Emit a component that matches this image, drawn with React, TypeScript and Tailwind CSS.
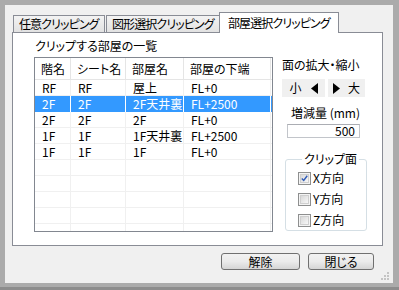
import React from 'react';

interface Row {
  floor: string;
  sheet: string;
  room: string;
  bottom: string;
  selected?: boolean;
}

const ROWS: Row[] = [
  { floor: 'RF', sheet: 'RF', room: '屋上', bottom: 'FL+0' },
  { floor: '2F', sheet: '2F', room: '2F天井裏', bottom: 'FL+2500', selected: true },
  { floor: '2F', sheet: '2F', room: '2F', bottom: 'FL+0' },
  { floor: '1F', sheet: '1F', room: '1F天井裏', bottom: 'FL+2500' },
  { floor: '1F', sheet: '1F', room: '1F', bottom: 'FL+0' },
];

const EMPTY_ROWS = 5;

function Tab({ label, active, className }: { label: string; active?: boolean; className: string }) {
  return (
    <div
      className={`flex items-center overflow-hidden border border-[#898c95] border-b-0 pl-[5px] tracking-[-0.9px] whitespace-nowrap ${
        active
          ? 'relative z-10 -mb-px h-[21px] bg-white pl-[8px]'
          : 'h-[17px] bg-linear-to-b from-[#f3f3f3] to-[#e2e2e2]'
      } ${className}`}
    >
      {label}
    </div>
  );
}

function Cells({ row }: { row?: Row }) {
  const sel = row?.selected;
  const cell = `h-full shrink-0 border-r pl-[7px] ${sel ? 'border-white' : 'border-[#f0f0f0]'}`;
  return (
    <div
      className={`flex h-[16px] items-center leading-[16px] ${
        sel ? 'bg-[#3399ff] text-white' : 'border-b border-[#f0f0f0]'
      }`}
    >
      <div className={`${cell} w-[36px]`}>{row?.floor}</div>
      <div className={`${cell} w-[55px]`}>{row?.sheet}</div>
      <div className={`${cell} w-[58px]`}>{row?.room}</div>
      <div className={`${cell} w-[87px]`}>{row?.bottom}</div>
    </div>
  );
}

function RoomList() {
  const head = 'flex h-full shrink-0 items-center border-r border-[#e5e5e5] pl-[6px]';
  return (
    <div className="h-[175px] w-[239px] overflow-hidden border border-[#828790] bg-white">
      <div className="flex h-[22px] items-center border-b border-[#e5e5e5]">
        <div className={`${head} w-[36px]`}>階名</div>
        <div className={`${head} w-[55px]`}>シート名</div>
        <div className={`${head} w-[58px]`}>部屋名</div>
        <div className={`${head} w-[87px]`}>部屋の下端</div>
      </div>
      {ROWS.map((row, i) => (
        <Cells key={i} row={row} />
      ))}
      {Array.from({ length: EMPTY_ROWS }, (_, i) => (
        <Cells key={`e${i}`} />
      ))}
    </div>
  );
}

function Arrow({ dir }: { dir: 'left' | 'right' }) {
  return (
    <svg width="7" height="11" viewBox="0 0 7 11">
      <polygon points={dir === 'left' ? '7,0 7,11 0,5.5' : '0,0 0,11 7,5.5'} fill="#000" />
    </svg>
  );
}

function Check({ label, checked }: { label: string; checked?: boolean }) {
  return (
    <div className="flex h-[14px] items-center gap-[2px]">
      <div className="flex h-[13px] w-[13px] items-center justify-center border border-[#8e8f8f] bg-[#f4f4f4]">
        <div className="flex h-[9px] w-[9px] items-center justify-center border border-[#cfcfcf] bg-linear-to-br from-[#d9d9d9] to-[#f7f7f7]">
          {checked && (
            <svg width="9" height="9" viewBox="0 0 9 9">
              <path d="M1 4.5 L3.5 7 L8 1" stroke="#2f5bb7" strokeWidth="1.8" fill="none" />
            </svg>
          )}
        </div>
      </div>
      <span>{label}</span>
    </div>
  );
}

function SideControls() {
  return (
    <div className="ml-[9px] flex w-[86px] flex-col">
      <div className="mt-[25px] h-[14px] leading-[14px]">面の拡大・縮小</div>
      <div className="mt-[7px] flex h-[18px] gap-[3px]">
        <button className="flex w-[43px] items-center justify-center gap-[9px] bg-[#f0f0f0]">
          <span>小</span>
          <Arrow dir="left" />
        </button>
        <button className="flex w-[37px] items-center justify-center gap-[8px] bg-[#f0f0f0]">
          <Arrow dir="right" />
          <span>大</span>
        </button>
      </div>
      <div className="mt-[9px] ml-[9px] h-[14px] leading-[14px]">増減量 (mm)</div>
      <div className="mt-[4px] ml-[5px] flex h-[14px] w-[73px] items-center justify-end border border-[#c2c5ca] border-t-[#abadb3] bg-white pr-[4px] leading-[12px]">
        500
      </div>
      <fieldset className="mt-[14px] ml-[3px] h-[79px] w-[82px] rounded-[3px] border border-[#d5dfe5] pl-[12px]">
        <legend className="ml-[4px] h-[14px] px-[2px] leading-[14px]">クリップ面</legend>
        <div className="mt-[5px] flex flex-col gap-[7px]">
          <Check label="X方向" checked />
          <Check label="Y方向" />
          <Check label="Z方向" />
        </div>
      </fieldset>
    </div>
  );
}

function PushButton({ label, width }: { label: string; width: string }) {
  return (
    <button
      className={`flex h-[17px] items-center justify-center rounded-[3px] border border-[#707070] bg-linear-to-b from-[#f2f2f2] via-[#ebebeb] to-[#d5d5d5] ${width}`}
    >
      {label}
    </button>
  );
}

export default function App() {
  return (
    <div className="h-[290px] w-[399px] border-b-[3px] border-[#8d8d8d] bg-[#ababab] pt-[5px] pl-[5px] text-[12px] text-black [font-family:'Noto_Sans_CJK_JP',sans-serif] [font-feature-settings:'palt']">
      <div className="relative flex h-[278px] w-[388px] flex-col bg-[#f0f0f0]">
        <div className="mt-[7px] flex h-[20px] items-end pl-[8px] leading-[14px]">
          <Tab label="任意クリッピング" className="w-[92px]" />
          <Tab label="図形選択クリッピング" className="ml-[1px] w-[115px]" />
          <Tab label="部屋選択クリッピング" active className="-ml-[2px] w-[120px]" />
        </div>
        <div className="ml-[7px] flex h-[214px] w-[371px] border border-[#898c95] bg-white pl-[21px]">
          <div className="flex flex-col">
            <div className="mt-[6px] ml-[1px] h-[14px] leading-[14px]">クリップする部屋の一覧</div>
            <div className="mt-[4px]">
              <RoomList />
            </div>
          </div>
          <SideControls />
        </div>
        <div className="mt-[7px] flex justify-end gap-[8px] pr-[19px]">
          <PushButton label="解除" width="w-[79px]" />
          <PushButton label="閉じる" width="w-[66px]" />
        </div>
        <svg className="absolute right-[3px] bottom-[2px]" width="10" height="10" viewBox="0 0 10 10">
          <rect x="7" y="1" width="2" height="2" fill="#c4c4c4" />
          <rect x="4" y="4" width="2" height="2" fill="#c4c4c4" />
          <rect x="7" y="4" width="2" height="2" fill="#c4c4c4" />
          <rect x="1" y="7" width="2" height="2" fill="#c4c4c4" />
          <rect x="4" y="7" width="2" height="2" fill="#c4c4c4" />
          <rect x="7" y="7" width="2" height="2" fill="#c4c4c4" />
        </svg>
      </div>
    </div>
  );
}
